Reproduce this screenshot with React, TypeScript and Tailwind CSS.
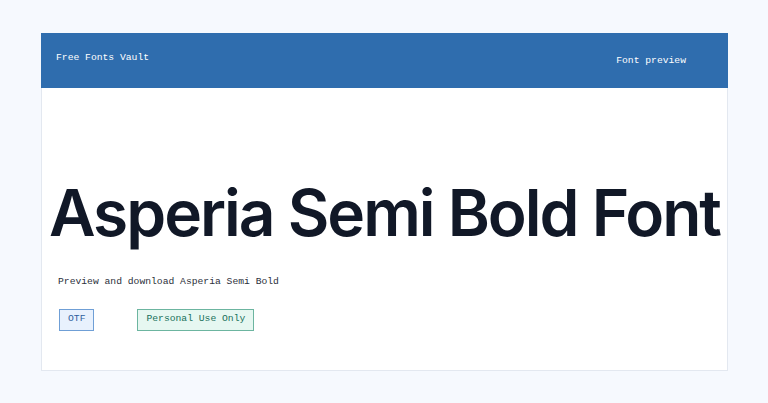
export default function App() {
  const mono = { fontFamily: '"Liberation Mono", "DejaVu Sans Mono", monospace' };
  return (
    <div className="min-h-[403px] w-[768px] bg-[#f6f9fe] pt-[33px] pl-[41px]">
      <div className="w-[687px] h-[338px] bg-white border border-[#e3e8f0] border-t-0 flex flex-col">
        <div className="h-[55px] bg-[#2f6dae] flex items-center justify-between pl-[15px] pr-[42px] -mx-px text-white text-[9.7px]" style={mono}>
          <span className="-mt-[5px]">Free Fonts Vault</span>
          <span className="mt-[1px]">Font preview</span>
        </div>
        <div className="flex flex-col">
          <h1 className="mt-[93px] pl-[7px] text-[64px] leading-none font-semibold text-[#111827] tracking-[-2px] whitespace-nowrap" style={{ fontFamily: 'Inter, "Noto Sans", sans-serif' }}>
            Asperia Semi Bold Font
          </h1>
          <p className="mt-[30px] pl-[16px] text-[9.7px] text-[#2b2f3a]" style={mono}>
            Preview and download Asperia Semi Bold
          </p>
          <div className="mt-[19px] pl-[17px] flex items-center gap-[43px] text-[9.7px]" style={mono}>
            <span className="h-[22px] px-[8px] flex items-center bg-[#e8f1fd] border border-[#6f9fd6] text-[#2f5f9e]">OTF</span>
            <span className="h-[22px] px-[8px] flex items-center bg-[#e6f7f1] border border-[#6cb5a0] text-[#17705a]">Personal Use Only</span>
          </div>
        </div>
      </div>
    </div>
  );
}
